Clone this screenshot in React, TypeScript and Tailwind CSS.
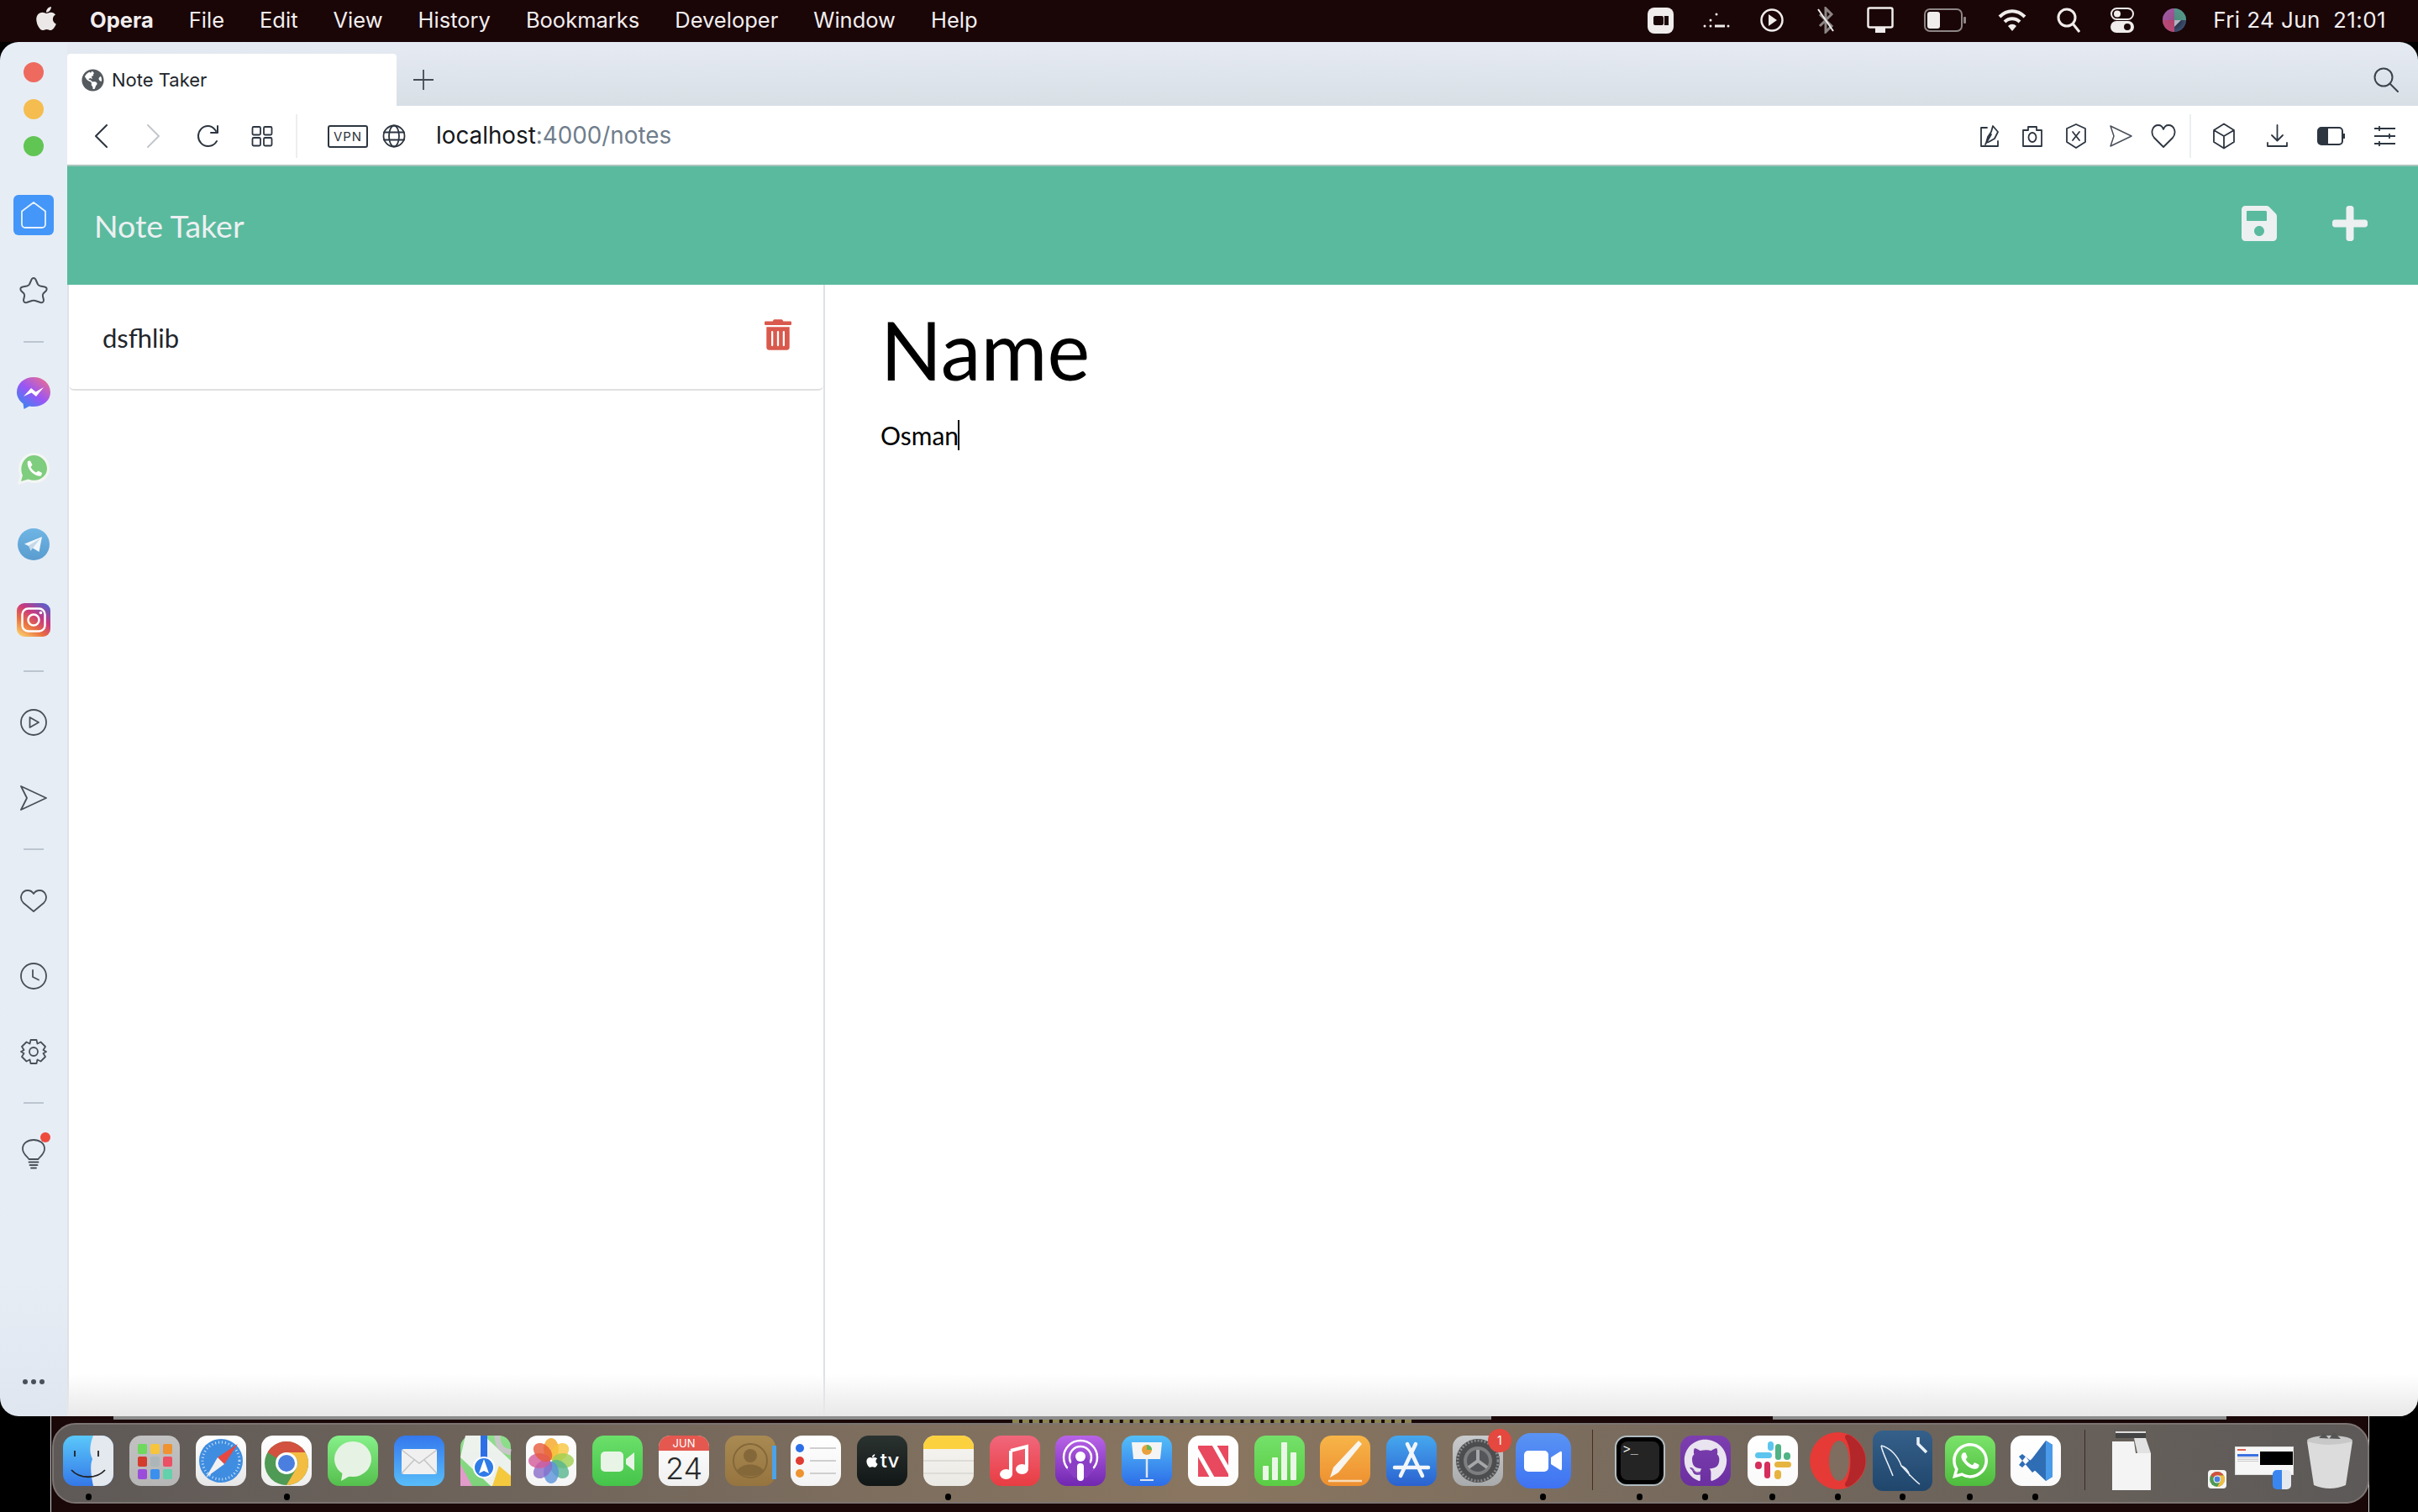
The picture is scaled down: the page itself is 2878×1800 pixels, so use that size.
import React from "react";
import { FaApple, FaGlobeAmericas, FaSave, FaPlus, FaTrashAlt, FaGithub, FaWhatsapp } from "react-icons/fa";

const inter = "font-['Inter','Liberation_Sans',sans-serif]";
const lato = "font-['Lato','Liberation_Sans',sans-serif]";
const S = "#4a5059";
const A = "#2c3540";

function Ic({ children, w = 30, h = 30, vb = "0 0 30 30", sw = 2, c = A, cls = "" }: any) {
  return (
    <svg width={w} height={h} viewBox={vb} fill="none" stroke={c} strokeWidth={sw} strokeLinecap="round" strokeLinejoin="round" className={"shrink-0 " + cls}>
      {children}
    </svg>
  );
}

function SideSlot({ children }: any) {
  return <div className="h-[90px] flex items-center justify-center shrink-0">{children}</div>;
}
function SideSep() {
  return (
    <div className="h-[32px] flex items-center justify-center shrink-0">
      <div className="w-[24px] h-[2px] bg-[#bcc5cf]" />
    </div>
  );
}

function Sidebar() {
  return (
    <div className="w-[80px] shrink-0 h-full flex flex-col bg-gradient-to-b from-[#e7edf5] from-90% to-[#dfe6ef]">
      <div className="flex flex-col items-center gap-5 pt-[24px] pb-[25px] shrink-0">
        <div className="w-[24px] h-[24px] rounded-full bg-[#ee6a5f]" />
        <div className="w-[24px] h-[24px] rounded-full bg-[#f5bd4f]" />
        <div className="w-[24px] h-[24px] rounded-full bg-[#61c554]" />
      </div>
      <SideSlot>
        <div className="w-[48px] h-[48px] rounded-[6px] bg-[#4496f8] flex items-center justify-center">
          <Ic w={32} h={34} vb="0 0 32 34" c="#e8f2fe" sw={1.8}>
            <path d="M2 12.5 L16 2 L30 12.5 V28 a4 4 0 0 1 -4 4 H6 a4 4 0 0 1 -4 -4 Z" />
          </Ic>
        </div>
      </SideSlot>
      <SideSlot>
        <Ic w={36} h={34} vb="0 0 36 34" c={S} sw={2}>
          <path d="M18 2 Q20 2 21 5 L23 9.5 Q24 11 26 11.5 L31 12.5 Q35 13.5 33 17 L29.5 20.5 Q28.5 22 29 24 L30 28 Q30 32 26 31 L20 29 Q18 28.5 16 29 L10 31 Q6 32 6 28 L7 24 Q7.5 22 6.5 20.5 L3 17 Q1 13.5 5 12.5 L10 11.5 Q12 11 13 9.5 L15 5 Q16 2 18 2 Z" />
        </Ic>
      </SideSlot>
      <SideSep />
      <SideSlot>
        <svg width="40" height="40" viewBox="0 0 40 40" className="shrink-0">
          <defs>
            <linearGradient id="msg" x1="0.1" y1="1" x2="0.9" y2="0">
              <stop offset="0" stopColor="#2d8cf0" />
              <stop offset="0.5" stopColor="#9a55f5" />
              <stop offset="1" stopColor="#f0708a" />
            </linearGradient>
          </defs>
          <path d="M20 1 C31 1 40 8.500 40 19 C40 29 31 36 20 36 C18 36 16.500 35.800 15 35.400 L8.500 39 L7.500 32.500 C3 29 0 24.500 0 19 C0 8.500 9 1 20 1 Z" fill="url(#msg)" />
          <path d="M8 24 L17 14 L22.500 18.500 L32 13 L23 24 L17.500 19.500 Z" fill="#fff" />
        </svg>
      </SideSlot>
      <SideSlot>
        <svg width="40" height="40" viewBox="0 0 40 40" className="shrink-0">
          <path d="M1 39 L4 28.500 C-2 15 8 1 20 1 C31 1 39 9.500 39 20 C39 31 28 41 13 35.500 Z" fill="#f3f6f4" />
          <path d="M5 35 L7 28 C2 16 10 4 20 4 C29 4 36 11 36 20 C36 29 26 37 13.500 32.500 Z" fill="#7fcd7e" />
          <path d="M13 11 L16 10.500 L18.500 15.500 L16.500 18 C18 21 20 23 23 24.500 L25.500 22.500 L30 25 L29 28.500 C21 30 11 20 13 11 Z" fill="#fff" />
        </svg>
      </SideSlot>
      <SideSlot>
        <svg width="38" height="38" viewBox="0 0 38 38" className="shrink-0">
          <defs>
            <linearGradient id="tel" x1="0" y1="0" x2="0" y2="1">
              <stop offset="0" stopColor="#6eb5e4" />
              <stop offset="1" stopColor="#5a9ccf" />
            </linearGradient>
          </defs>
          <circle cx="19" cy="19" r="19" fill="url(#tel)" />
          <path d="M8 18.500 L29 10 L25.500 28 L18 23.500 Z" fill="#f0f6fb" />
          <path d="M13 20.500 L15.500 27 L18 23.500 L27 12 Z" fill="#c5d9e8" />
        </svg>
      </SideSlot>
      <SideSlot>
        <svg width="40" height="40" viewBox="0 0 40 40" className="shrink-0">
          <defs>
            <linearGradient id="ig" x1="0.1" y1="1" x2="0.8" y2="0">
              <stop offset="0" stopColor="#fbd36f" />
              <stop offset="0.35" stopColor="#e9703f" />
              <stop offset="0.65" stopColor="#c9387f" />
              <stop offset="1" stopColor="#5c5fc9" />
            </linearGradient>
          </defs>
          <rect width="40" height="40" rx="9" fill="url(#ig)" />
          <rect x="6.500" y="6.500" width="27" height="27" rx="7" fill="none" stroke="#fff" strokeWidth="2.500" />
          <circle cx="20" cy="20" r="6.500" fill="none" stroke="#fff" strokeWidth="2.500" />
          <circle cx="28.500" cy="11.500" r="1.800" fill="#fff" />
        </svg>
      </SideSlot>
      <SideSep />
      <SideSlot>
        <Ic w={32} h={32} vb="0 0 32 32" c={S} sw={1.8}>
          <circle cx="16" cy="16" r="15" />
          <path d="M11.500 10 L22 16 L11.500 22 Z" />
        </Ic>
      </SideSlot>
      <SideSlot>
        <Ic w={32} h={32} vb="0 0 32 32" c={S} sw={1.8}>
          <path d="M1 2 L31 16 L1 30 L8 16 Z" />
        </Ic>
      </SideSlot>
      <SideSep />
      <SideSlot>
        <Ic w={32} h={30} vb="0 0 32 30" c={S} sw={1.8}>
          <path d="M16 28 L4 18 C-2 12 2 3 9 3 C12 3 14.500 4.500 16 7 C17.500 4.500 20 3 23 3 C30 3 34 12 28 18 Z" />
        </Ic>
      </SideSlot>
      <SideSlot>
        <Ic w={32} h={32} vb="0 0 32 32" c={S} sw={1.8}>
          <circle cx="16" cy="16" r="15" />
          <path d="M15 9 V17 L22 20.500" />
        </Ic>
      </SideSlot>
      <SideSlot>
        <Ic w={32} h={32} vb="0 0 32 32" c={S} sw={1.8}>
          <path d="M12.500 2 H19.500 L20.500 6.500 L24.500 4.500 L30 10 L27.500 14 L31 16 L27.500 18 L30 22 L24.500 27.500 L20.500 25.500 L19.500 30 H12.500 L11.500 25.500 L7.500 27.500 L2 22 L4.500 18 L1 16 L4.500 14 L2 10 L7.500 4.500 L11.500 6.500 Z" />
          <circle cx="16" cy="16" r="5" />
        </Ic>
      </SideSlot>
      <SideSep />
      <SideSlot>
        <div className="relative w-[28px] h-[36px]">
          <Ic w={28} h={36} vb="0 0 28 36" c={S} sw={1.8}>
            <path d="M8.500 24 C6 20 1 18 1 11.500 C1 5 7 1 14 1 C21 1 27 5 27 11.500 C27 18 22 20 19.500 24 Z" />
            <path d="M8.500 27.500 H19.500 M9.500 31 H18.500 M11 34.500 H17" />
          </Ic>
          <div className="absolute -top-[8px] -right-[6px] w-[12px] h-[12px] rounded-full bg-[#ee4a3e]" />
        </div>
      </SideSlot>
      <div className="mt-auto pb-[38px] flex justify-center gap-[4px] shrink-0">
        <div className="w-[6px] h-[6px] rounded-full bg-[#4a5059]" />
        <div className="w-[6px] h-[6px] rounded-full bg-[#4a5059]" />
        <div className="w-[6px] h-[6px] rounded-full bg-[#4a5059]" />
      </div>
    </div>
  );
}

function TabStrip() {
  return (
    <div className="h-[76px] shrink-0 bg-gradient-to-b from-[#e6ebf3] to-[#d8dfe5] flex items-end pr-[23px]">
      <div className={"w-[392px] h-[62px] bg-white rounded-t-[4px] flex items-center pl-[17px] gap-[9px] shrink-0 " + inter}>
        <FaGlobeAmericas className="text-[#555a5f] w-[27px] h-[27px]" />
        <span className="text-[22px] text-[#22262b] leading-none">Note Taker</span>
      </div>
      <div className="h-[62px] flex items-center ml-[19px]">
        <Ic w={26} h={26} vb="0 0 26 26" c="#444b53" sw={1.8}>
          <path d="M13 1 V25 M1 13 H25" strokeLinecap="butt" />
        </Ic>
      </div>
      <div className="ml-auto h-[62px] flex items-center">
        <Ic w={30} h={30} vb="0 0 30 30" c="#3c434b" sw={2}>
          <circle cx="12" cy="12" r="10.500" />
          <path d="M19.500 19.500 L29 29" />
        </Ic>
      </div>
    </div>
  );
}

function AddressBar() {
  return (
    <div className="h-[72px] shrink-0 bg-white border-b-2 border-[#a9c4bb] flex items-center pt-[2px] pl-[32px] pr-[26px]">
      <Ic w={16} h={28} vb="0 0 16 28" c={A} sw={2}><path d="M15 1 L2 14 L15 27" /></Ic>
      <Ic w={16} h={28} vb="0 0 16 28" c="#c3c7cb" sw={2} cls="ml-[47px]"><path d="M1 1 L14 14 L1 27" /></Ic>
      <Ic w={27} h={28} vb="0 0 27 28" c={A} sw={2} cls="ml-[43px]">
        <path d="M23 8 C20.500 4 17 2 13.500 2 C7 2 2 7.500 2 14 C2 20.500 7 26 13.500 26 C18 26 22 23.500 24 20" />
        <path d="M25 2 V10 H17" />
      </Ic>
      <Ic w={26} h={26} vb="0 0 26 26" c={A} sw={1.8} cls="ml-[38px]">
        <rect x="1.500" y="2" width="9.500" height="9.500" rx="1.500" />
        <rect x="15" y="2" width="9.500" height="9.500" rx="1.500" />
        <rect x="1.500" y="15" width="9.500" height="9.500" rx="1.500" />
        <rect x="15" y="15" width="9.500" height="9.500" rx="1.500" />
      </Ic>
      <div className="w-[2px] h-[52px] bg-[#eceef0] ml-[27px]" />
      <div className={"ml-[36px] w-[48px] h-[27px] border-2 border-[#2c3540] rounded-[3px] flex items-center justify-center text-[15px] tracking-[1px] text-[#2c3540] leading-none " + inter}>VPN</div>
      <Ic w={28} h={28} vb="0 0 28 28" c={A} sw={1.8} cls="ml-[17px]">
        <circle cx="14" cy="14" r="12.500" />
        <ellipse cx="14" cy="14" rx="6" ry="12.500" />
        <path d="M2 9.500 H26 M2 18.500 H26" />
      </Ic>
      <div className={"ml-[36px] text-[27.8px] leading-none whitespace-nowrap " + inter}>
        <span className="text-[#15181c]">localhost</span>
        <span className="text-[#6f7d8c]">:4000/notes</span>
      </div>
      <div className="ml-auto flex items-center">
        <Ic w={24} h={28} vb="0 0 24 28" c={A} sw={1.8}>
          <path d="M9 4 H2 V26 H22 V20 M16 2 L22 9 L18 17 L11 21 L8 22 L10 15 L14 9 Z M7 24 L14 12" />
        </Ic>
        <Ic w={26} h={28} vb="0 0 26 28" c={A} sw={1.8} cls="ml-[26px]">
          <path d="M2 7 H8 V3 H18 V7 H24 V26 H2 Z" />
          <ellipse cx="13" cy="15.500" rx="4.500" ry="5.500" />
        </Ic>
        <Ic w={26} h={30} vb="0 0 26 30" c={A} sw={1.8} cls="ml-[26px]">
          <path d="M13 1 L24 6 V22 L13 29 L2 22 V6 Z" />
          <path d="M9 10 L17 20 M17 10 L9 20" />
        </Ic>
        <Ic w={28} h={26} vb="0 0 28 26" c="#4a5059" sw={1.5} cls="ml-[26px]">
          <path d="M2 1 L27 13 L2 25 L6 13 Z" />
        </Ic>
        <Ic w={30} h={30} vb="0 0 30 30" c={A} sw={1.8} cls="ml-[22px]">
          <path d="M15 28 L4 17 C-1 11 2 2 9 2 C12 2 14 4 15 7 C16 4 18 2 21 2 C28 2 31 11 26 17 Z" />
        </Ic>
        <div className="w-[2px] h-[52px] bg-[#eceef0] ml-[16px]" />
        <Ic w={28} h={32} vb="0 0 28 32" c={A} sw={1.8} cls="ml-[25px]">
          <path d="M14 1.500 L26 9 V23 L14 30.500 L2 23 V9 Z M2 9 L14 16 L26 9 M14 16 V30.500" />
        </Ic>
        <Ic w={27} h={28} vb="0 0 27 28" c={A} sw={1.8} cls="ml-[36px]">
          <path d="M13.500 1 V19 M7 13 L13.500 19.500 L20 13 M2 22 V26 H25 V22" />
        </Ic>
        <svg width="33" height="22" viewBox="0 0 33 22" className="ml-[34px] shrink-0">
          <rect x="1" y="1" width="29" height="20" rx="4" fill="none" stroke={A} strokeWidth="2" />
          <path d="M1 5 a4 4 0 0 1 4 -4 H13 V21 H5 a4 4 0 0 1 -4 -4 Z" fill={A} />
          <rect x="31" y="8" width="2" height="6" fill={A} />
        </svg>
        <Ic w={27} h={26} vb="0 0 27 26" c={A} sw={1.8} cls="ml-[34px]">
          <path d="M1 4 H26 M1 13 H26 M1 22 H26 M7 1 V7 M19 10 V16 M7 19 V25" strokeLinecap="butt" />
        </Ic>
      </div>
    </div>
  );
}

function Page() {
  return (
    <div className="flex-1 min-h-0 flex flex-col relative">
      <div className="h-[141px] shrink-0 bg-[#5aba9e] flex items-center pl-[32px] pr-[60px]">
        <div className={"text-[37.5px] leading-none text-[#ecf0f1] " + lato}>Note Taker</div>
        <FaSave className="ml-auto w-[42px] h-[48px] text-[#ecf0f1] -mt-[5px]" />
        <FaPlus className="ml-[66px] w-[42px] h-[48px] text-[#ecf0f1] -mt-[5px]" />
      </div>
      <div className="flex-1 min-h-0 flex bg-white">
        <div className="w-[902px] shrink-0 border-l-2 border-r-2 border-[#dee2e6]">
          <div className={"h-[126px] border-b-2 border-[#e0e0e0] rounded-b-[6px] flex items-center justify-between pl-[40px] pr-[38px] " + lato}>
            <span className="text-[31px] text-[#22262b] leading-none mt-[2px]">dsfhlib</span>
            <FaTrashAlt className="w-[32px] h-[37px] text-[#d9594c] -mt-[5px]" />
          </div>
        </div>
        <div className={"flex-1 pl-[66px] pt-[19px] " + lato}>
          <h1 className="text-[96px] leading-[115px] text-black font-normal">Name</h1>
          <div className="mt-[21px] text-[30px] leading-[48px] text-black flex items-center">
            <span>Osman</span>
            <span className="w-[2px] h-[36px] bg-black -ml-[1px]" />
          </div>
        </div>
      </div>
      <div className="absolute left-0 right-0 bottom-0 h-[50px] bg-gradient-to-b from-transparent to-[#e8e8e8] pointer-events-none" />
    </div>
  );
}

function Tile({ id, from, to, children, rx = 14 }: any) {
  return (
    <svg width="60" height="60" viewBox="0 0 60 60" className="shrink-0 overflow-visible">
      <defs>
        <linearGradient id={id} x1="0" y1="0" x2="0" y2="1">
          <stop offset="0" stopColor={from} />
          <stop offset="1" stopColor={to} />
        </linearGradient>
      </defs>
      <rect width="60" height="60" rx={rx} fill={`url(#${id})`} />
      {children}
    </svg>
  );
}

function ChromeMark({ size = 52 }: { size?: number }) {
  const r = 26;
  return (
    <svg width={size} height={size} viewBox="0 0 52 52" className="shrink-0">
      <circle cx={r} cy={r} r={r} fill="#4f9a55" />
      <path d="M26 0 A26 26 0 0 1 48.500 13 H26 A13 13 0 0 0 14.500 20 L3.500 13 A26 26 0 0 1 26 0 Z" fill="#d2513f" />
      <path d="M48.500 13 A26 26 0 0 1 26 52 L37.500 32.500 A13 13 0 0 0 37.500 19.500 L26 13 Z" fill="#f3bd42" />
      <circle cx={r} cy={r} r="13" fill="#fff" />
      <circle cx={r} cy={r} r="10" fill="#4a7fe0" />
    </svg>
  );
}

function Slot({ w = "w-[60px]", dot = false, children }: any) {
  return (
    <div className={"relative h-[60px] flex items-center justify-center shrink-0 " + w}>
      {children}
      {dot && <div className="absolute top-[69px] left-1/2 -ml-[3.5px] w-[7px] h-[8px] rounded-full bg-black" />}
    </div>
  );
}

function Dock() {
  const gap = "w-[18.76px] shrink-0";
  const G = () => <div className={gap} />;
  return (
    <div className="w-[2758px] h-[96px] shrink-0 rounded-[28px] border-2 border-[#7b7472] bg-gradient-to-r from-[#5e5957] via-[#8a7660] to-[#5c5958] flex items-center pl-[11px] pb-[6px]">
      <Slot dot>
        <Tile id="f1" from="#5ac8fa" to="#3478e8">
          <path d="M36 0 H46 A14 14 0 0 1 60 14 V46 A14 14 0 0 1 46 60 H36 C33 45 32 35 35 28 C30 18 33 8 36 0 Z" fill="#e4e8ef" />
          <path d="M14 18 V25 M42 18 V25" stroke="#222" strokeWidth="1.8" />
          <path d="M10 41 C20 52 40 52 50 41" stroke="#222" strokeWidth="1.8" fill="none" />
        </Tile>
      </Slot>
      <G />
      <Slot>
        <Tile id="f2" from="#c2c2c2" to="#b6b6b6">
          {[["#6ed95c", 10, 10], ["#f7c43c", 25, 10], ["#ee9330", 40, 10], ["#d33c2c", 10, 25], ["#adb5b8", 25, 25], ["#ec5064", 40, 25], ["#9a4ddb", 10, 40], ["#3b90ee", 25, 40], ["#63d1ac", 40, 40]].map((x: any, i) => (
            <rect key={i} x={x[1]} y={x[2]} width="11" height="12" rx="2" fill={x[0]} />
          ))}
        </Tile>
      </Slot>
      <G />
      <Slot>
        <Tile id="f3" from="#ffffff" to="#e6e6e6">
          <circle cx="30" cy="30" r="26" fill="#3f8de0" />
          <circle cx="30" cy="30" r="22" fill="none" stroke="#cfe5fb" strokeWidth="3" strokeDasharray="1 3" />
          <path d="M50 10 L34 34 L26 26 Z" fill="#e8483f" />
          <path d="M12 50 L26 26 L34 34 Z" fill="#f2f2f2" />
        </Tile>
      </Slot>
      <G />
      <Slot dot>
        <Tile id="f4" from="#ffffff" to="#eeeeee">
          <g transform="translate(4 7)"><ChromeMark size={52} /></g>
        </Tile>
      </Slot>
      <G />
      <Slot>
        <Tile id="f5" from="#86f08a" to="#55bf4d">
          <ellipse cx="30" cy="28" rx="22" ry="21" fill="#e6f3e4" />
          <path d="M18 42 L16 54 L30 46 Z" fill="#e6f3e4" />
        </Tile>
      </Slot>
      <G />
      <Slot>
        <Tile id="f6" from="#3478ee" to="#58bdf8">
          <rect x="9" y="16" width="42" height="30" rx="3" fill="#f0f0f0" />
          <path d="M9 17 L30 33 L51 17 M9 45 L24 29 M51 45 L36 29" stroke="#c4c4c4" strokeWidth="1.500" fill="none" />
        </Tile>
      </Slot>
      <G />
      <Slot>
        <Tile id="f7" from="#8fe08c" to="#7ed27a">
          <path d="M0 34 L14 60 H0 Z" fill="#e29bcb" />
          <path d="M6 0 H28 L60 30 V60 H36 L0 26 Z" fill="#f2f2f2" opacity="0.95" />
          <path d="M38 60 H60 V48 L46 36 Z" fill="#f4c93e" />
          <rect x="24" y="0" width="8" height="30" fill="#2d6fe6" />
          <path d="M44 0 C44 14 50 18 60 20" stroke="#c7c7c7" strokeWidth="7" fill="none" />
          <circle cx="28" cy="38" r="13" fill="#fff" />
          <circle cx="28" cy="38" r="11" fill="#2f7be8" />
          <path d="M28 28 L34 45 L28 42 L22 45 Z" fill="#fff" />
        </Tile>
      </Slot>
      <G />
      <Slot>
        <Tile id="f8" from="#ffffff" to="#f4f4f4">
          {[["#f5a623", 0], ["#f7c43c", 45], ["#9fd04f", 90], ["#58b58d", 135], ["#5b93d9", 180], ["#8a6bc9", 225], ["#d35a9a", 270], ["#e65a3a", 315]].map((x: any, i) => (
            <ellipse key={i} cx="30" cy="16" rx="9" ry="13" fill={x[0]} opacity="0.8" transform={`rotate(${x[1]} 30 30)`} />
          ))}
        </Tile>
      </Slot>
      <G />
      <Slot>
        <Tile id="f9" from="#6be06a" to="#45c44a">
          <rect x="10" y="19" width="27" height="24" rx="5" fill="#e8f5e6" />
          <path d="M40 28 L50 20 V42 L40 34 Z" fill="#e8f5e6" />
        </Tile>
      </Slot>
      <G />
      <Slot>
        <Tile id="f10" from="#ffffff" to="#f0f0f0">
          <path d="M0 18 V14 A14 14 0 0 1 14 0 H46 A14 14 0 0 1 60 14 V18 Z" fill="#e4584f" />
          <text x="30" y="14" textAnchor="middle" fontSize="13" fill="#fff" fontFamily="Inter, sans-serif">JUN</text>
          <text x="30" y="52" textAnchor="middle" fontSize="36" fill="#2a2a2a" fontFamily="Inter, sans-serif" fontWeight="300">24</text>
        </Tile>
      </Slot>
      <G />
      <Slot>
        <Tile id="f11" from="#a98a52" to="#96743f">
          <rect x="56" y="12" width="5" height="40" fill="#4ba3e8" />
          <circle cx="30" cy="30" r="20" fill="none" stroke="#84683a" strokeWidth="2" />
          <circle cx="30" cy="24" r="8" fill="#84683a" />
          <path d="M14 42 C20 32 40 32 46 42 C40 50 20 50 14 42 Z" fill="#84683a" />
        </Tile>
      </Slot>
      <G />
      <Slot>
        <Tile id="f12" from="#ffffff" to="#f3f3f3">
          <circle cx="11" cy="15" r="5" fill="#2d6fe6" />
          <circle cx="11" cy="30" r="5" fill="#e03c32" />
          <circle cx="11" cy="45" r="5" fill="#ee9330" />
          <path d="M23 15 H54 M23 30 H54 M23 45 H54" stroke="#cfcfcf" strokeWidth="2" />
        </Tile>
      </Slot>
      <G />
      <Slot>
        <div className="relative w-[60px] h-[60px] rounded-[14px] bg-gradient-to-b from-[#2b3331] to-[#111716] flex items-center justify-center gap-[2px] text-white">
          <FaApple className="w-[16px] h-[18px]" />
          <span className={"text-[24px] leading-none font-medium " + inter}>tv</span>
        </div>
      </Slot>
      <G />
      <Slot dot>
        <Tile id="f13" from="#f7f6f2" to="#eae9e4">
          <path d="M0 16 V14 A14 14 0 0 1 14 0 H46 A14 14 0 0 1 60 14 V16 Z" fill="#fbd140" />
          <path d="M0 30 H60 M0 45 H60" stroke="#dddcd7" strokeWidth="2" />
        </Tile>
      </Slot>
      <G />
      <Slot>
        <Tile id="f14" from="#f1677c" to="#e83c42">
          <path d="M25 18 L44 13 V38" stroke="#fff" strokeWidth="4" fill="none" />
          <path d="M25 18 V46" stroke="#fff" strokeWidth="4" />
          <ellipse cx="19.500" cy="46" rx="7.500" ry="6" fill="#fff" />
          <ellipse cx="38.500" cy="40" rx="7.500" ry="6" fill="#fff" />
        </Tile>
      </Slot>
      <G />
      <Slot>
        <Tile id="f15" from="#b863e8" to="#7127b0">
          <circle cx="30" cy="26" r="20" stroke="#fff" strokeWidth="2.500" fill="none" />
          <circle cx="30" cy="26" r="13" stroke="#fff" strokeWidth="2.500" fill="none" />
          <path d="M14 40 L22 50 H38 L46 40 L36 24 H24 Z" fill="#8a3ec6" />
          <circle cx="30" cy="25" r="6" fill="#fff" />
          <rect x="26" y="33" width="8" height="21" rx="4" fill="#fff" />
        </Tile>
      </Slot>
      <G />
      <Slot>
        <Tile id="f16" from="#54bff8" to="#2d6de8">
          <path d="M12 8 H48 L46 28 H14 Z" fill="#f4f4f4" />
          <circle cx="30" cy="17" r="6" fill="#e9a13c" />
          <path d="M30 11 V17 H36 A6 6 0 0 0 30 11 Z" fill="#5bb85b" />
          <path d="M30 28 V50" stroke="#dde6f0" strokeWidth="2.500" />
          <path d="M22 52 H38 V54 H22 Z" fill="#dde6f0" />
        </Tile>
      </Slot>
      <G />
      <Slot>
        <Tile id="f17" from="#ffffff" to="#fbfbfb">
          <rect x="12" y="12" width="36" height="37" fill="#e8495e" />
          <path d="M9 15 L30 52 M30 9 L51 46" stroke="#fff" strokeWidth="5" />
        </Tile>
      </Slot>
      <G />
      <Slot>
        <Tile id="f18" from="#74e06a" to="#5acd44">
          <rect x="10" y="36" width="7" height="17" rx="1" fill="#eaf7e6" />
          <rect x="21" y="26" width="7" height="27" rx="1" fill="#eaf7e6" />
          <rect x="32" y="8" width="7" height="45" rx="1" fill="#eaf7e6" />
          <rect x="43" y="20" width="7" height="33" rx="1" fill="#eaf7e6" />
        </Tile>
      </Slot>
      <G />
      <Slot>
        <Tile id="f19" from="#f7b548" to="#ee8f30">
          <path d="M12 50 L16 38 L46 6 L50 10 L22 44 Z" fill="#f8f4ee" />
          <path d="M10 54 H50" stroke="#f8dcb8" strokeWidth="2.500" />
        </Tile>
      </Slot>
      <G />
      <Slot>
        <Tile id="f20" from="#46a8ee" to="#2a62d0">
          <path d="M25 10 L43 48 M35 10 L17 48" stroke="#f2f6fb" strokeWidth="4.500" strokeLinecap="round" />
          <path d="M10 38 H50" stroke="#f2f6fb" strokeWidth="4.500" strokeLinecap="round" />
        </Tile>
      </Slot>
      <G />
      <Slot>
        <div className="relative w-[60px] h-[60px]">
          <Tile id="f21" from="#c8cacb" to="#a8aaab">
            <circle cx="30" cy="30" r="26" fill="#4c4d4e" />
            <circle cx="30" cy="30" r="24" fill="none" stroke="#88898a" strokeWidth="3" strokeDasharray="2 2" />
            <circle cx="30" cy="30" r="17" fill="#7d7e80" />
            <circle cx="30" cy="30" r="13" fill="#55565a" />
            <path d="M30 17 V30 L19 38 M30 30 L41 38" stroke="#a6a7a9" strokeWidth="4" fill="none" />
          </Tile>
          <div className="absolute -top-[8px] -right-[10px] w-[28px] h-[28px] rounded-full bg-[#e5483f] flex items-center justify-center text-white text-[14px] leading-none">
            <span className={inter}>1</span>
          </div>
        </div>
      </Slot>
      <div className="w-[15px] shrink-0" />
      <Slot w="w-[66px]" dot>
        <div className="w-[66px] h-[66px] rounded-[18px] bg-gradient-to-b from-[#5a94f3] to-[#3f72f2] flex items-center justify-center shrink-0 gap-[3px]">
          <div className="w-[29px] h-[25px] rounded-[5px] bg-white" />
          <svg width="13" height="24" viewBox="0 0 13 24"><path d="M0 8 L11 1 Q13 0 13 3 V21 Q13 24 11 23 L0 16 Z" fill="#fff" /></svg>
        </div>
      </Slot>
      <div className="w-[25px] shrink-0" />
      <div className="w-[1px] h-[72px] bg-[#4a2a28] shrink-0 -mt-[2px]" />
      <div className="w-[26px] shrink-0" />
      <Slot dot>
        <div className="w-[60px] h-[60px] rounded-[14px] bg-black border-2 border-[#b0bcc0] flex p-[5px]">
          <div className={"w-full h-full rounded-[8px] bg-[#242424] text-white text-[15px] leading-none pl-[3px] pt-[3px] " + "font-['Liberation_Mono',monospace]"}>&gt;_</div>
        </div>
      </Slot>
      <div className="w-[18px] shrink-0" />
      <Slot dot>
        <div className="w-[60px] h-[60px] rounded-[14px] bg-gradient-to-b from-[#7d3fb0] to-[#6b2fa0] flex items-center justify-center">
          <FaGithub className="w-[52px] h-[52px] text-[#e9e4ef]" />
        </div>
      </Slot>
      <div className="w-[20px] shrink-0" />
      <Slot dot>
        <Tile id="f22" from="#ffffff" to="#fafafa">
          <rect x="9" y="20" width="20" height="7" rx="3.500" fill="#5cc5ee" />
          <rect x="24" y="7" width="7" height="11" rx="3.500" fill="#5cc5ee" />
          <rect x="33" y="10" width="7" height="19" rx="3.500" fill="#4fb386" />
          <rect x="43" y="20" width="8" height="9" rx="4" fill="#4fb386" />
          <rect x="9" y="31" width="8" height="9" rx="4" fill="#d62d5d" />
          <rect x="20" y="31" width="7" height="20" rx="3.500" fill="#d62d5d" />
          <rect x="32" y="31" width="20" height="7" rx="3.500" fill="#e6b43f" />
          <rect x="32" y="41" width="8" height="11" rx="4" fill="#e6b43f" />
        </Tile>
      </Slot>
      <div className="w-[14px] shrink-0" />
      <Slot w="w-[67px]" dot>
        <svg width="67" height="68" viewBox="0 0 67 68" className="shrink-0 overflow-visible">
          <ellipse cx="33.500" cy="34" rx="33.500" ry="34" fill="#e63a36" />
          <path d="M50 5 C72 20 72 48 50 63 C42 68 40 62 44 58 C50 45 50 23 44 10 C40 6 42 0 50 5 Z" fill="#b3262a" />
          <ellipse cx="35" cy="34" rx="12" ry="24" fill="#7f6d5f" />
        </svg>
      </Slot>
      <div className="w-[8px] shrink-0" />
      <Slot w="w-[71px]" dot>
        <div className="w-[71px] h-[72px] rounded-[12px] bg-gradient-to-b from-[#35608a] to-[#20466c] flex items-center justify-center shrink-0">
          <svg width="62" height="64" viewBox="0 0 62 64" fill="none" stroke="#e8eff6" strokeWidth="1.500">
            <path d="M6 14 C16 16 26 26 30 38 C36 44 42 52 52 60 M6 14 C8 24 14 34 20 50 M30 38 C34 40 38 42 40 50" />
            <path d="M50 4 L50 12 L60 22" strokeWidth="3.500" />
          </svg>
        </div>
      </Slot>
      <div className="w-[15px] shrink-0" />
      <Slot dot>
        <div className="w-[60px] h-[60px] rounded-[14px] bg-gradient-to-b from-[#7be36a] to-[#4ebc3d] flex items-center justify-center">
          <FaWhatsapp className="w-[48px] h-[48px] text-white" />
        </div>
      </Slot>
      <div className="w-[18px] shrink-0" />
      <Slot dot>
        <Tile id="f23" from="#ffffff" to="#fafafa">
          <path d="M42 6 L50 11 V49 L42 54 L20 33 L26 27 Z" fill="#2f6db5" />
          <path d="M42 6 L50 11 V49 L42 54 Z" fill="#4a9aea" />
          <path d="M10 25 L14 22 L34 38 L26 44 Z M10 35 L14 38 L22 30 L18 25 Z" fill="#2f6db5" />
        </Tile>
      </Slot>
      <div className="w-[28px] shrink-0" />
      <div className="w-[1px] h-[72px] bg-[#3a2a28] shrink-0 -mt-[2px]" />
      <div className="w-[32px] shrink-0" />
      <Slot w="w-[46px]">
        <svg width="46" height="70" viewBox="0 0 46 70" className="shrink-0 overflow-visible">
          <path d="M4 0 H40 V2 H4 Z" fill="#ddd" />
          <rect x="4" y="2" width="36" height="6" fill="#444" />
          <path d="M0 12 H26 L28 26 H46 V70 H0 Z" fill="#f4f4f4" />
          <path d="M26 8 H40 L46 26 H30 Z" fill="#e2e2e2" />
        </svg>
      </Slot>
      <div className="w-[68px] shrink-0" />
      <Slot w="w-[22px]">
        <div className="relative top-[22px] w-[22px] h-[22px] rounded-[4px] bg-[#f5f5f5] flex items-center justify-center shrink-0">
          <ChromeMark size={18} />
        </div>
      </Slot>
      <div className="w-[10px] shrink-0" />
      <Slot w="w-[70px]">
        <div className="relative w-[70px] h-[34px] bg-[#f6f6f6] border border-[#ddd] flex shrink-0">
          <div className="w-[29px] h-full flex flex-col gap-[1px] p-[2px]">
            <div className="h-[2px] w-[10px] bg-[#e06050]" />
            <div className="h-[3px] bg-[#3a70e0] mt-[3px]" />
            <div className="h-[1px] bg-[#ccc]" />
            <div className="h-[1px] bg-[#ccc]" />
            <div className="h-[1px] bg-[#ccc]" />
          </div>
          <div className="flex-1 h-[16px] bg-black mt-[5px]" />
          <div className="absolute top-[27px] right-[2px] w-[22px] h-[23px] rounded-[5px] bg-gradient-to-r from-[#3a86f0] from-50% to-[#e4e8ef] to-50%" />
        </div>
      </Slot>
      <div className="w-[16px] shrink-0" />
      <Slot w="w-[54px]">
        <svg width="54" height="70" viewBox="0 0 54 70" className="shrink-0 overflow-visible">
          <ellipse cx="27" cy="11" rx="27" ry="6" fill="#c8c8c8" />
          <path d="M14 8 L20 2 L26 9 L32 1 L40 9 Z" fill="#555" />
          <path d="M0 12 L8 64 Q27 72 46 64 L54 12 Q27 20 0 12 Z" fill="#dcdcdc" />
        </svg>
      </Slot>
    </div>
  );
}

function Menu() {
  return (
    <div className={"h-[50px] shrink-0 bg-[#1a0507] flex items-center pl-[40px] pb-[2px] text-[#f2eeee] text-[25.5px] leading-none whitespace-nowrap " + inter}>
      <FaApple className="w-[30px] h-[32px] text-[#ece8e8] shrink-0 -mt-[4px]" />
      <span className="ml-[37px] font-bold">Opera</span>
      <div className="ml-[42px] flex items-center gap-[42px]">
        <span>File</span>
        <span>Edit</span>
        <span>View</span>
        <span>History</span>
        <span>Bookmarks</span>
        <span>Developer</span>
        <span>Window</span>
        <span>Help</span>
      </div>
      <div className="ml-auto flex items-center pr-[38px]">
        <div className="w-[31px] h-[31px] rounded-[8px] bg-[#f0ecec] flex items-center justify-center gap-[1px]">
          <div className="w-[12px] h-[11px] bg-[#1a0507] rounded-[2px]" />
          <div className="w-[5px] h-[11px] bg-[#1a0507]" />
        </div>
        <svg width="32" height="18" viewBox="0 0 32 18" className="ml-[35px] shrink-0" fill="#f0ecec">
          <circle cx="16" cy="2" r="1.500" />
          <circle cx="9" cy="9" r="1.500" />
          <circle cx="2" cy="16" r="1.500" />
          <circle cx="9" cy="16" r="1.500" />
          <rect x="14" y="14.500" width="12" height="3" />
          <circle cx="30" cy="16" r="1.500" />
        </svg>
        <svg width="28" height="30" viewBox="0 0 28 30" className="ml-[36px] shrink-0">
          <circle cx="14" cy="15" r="12.500" fill="none" stroke="#f0ecec" strokeWidth="2.500" />
          <path d="M10 8 L20 15 L10 22 Z" fill="#f0ecec" />
        </svg>
        <svg width="24" height="32" viewBox="0 0 24 32" className="ml-[38px] shrink-0" fill="none" stroke="#8d8686" strokeWidth="3">
          <path d="M5 9 L19 23 L12 30 V2 L19 9 L5 23" />
          <path d="M3 3 L21 29" stroke="#eee" strokeWidth="2" />
        </svg>
        <svg width="32" height="32" viewBox="0 0 32 32" className="ml-[37px] shrink-0">
          <rect x="1.500" y="1.500" width="29" height="23" rx="2" fill="none" stroke="#f0ecec" strokeWidth="2.500" />
          <rect x="10" y="25" width="12" height="6" fill="#f0ecec" />
        </svg>
        <svg width="50" height="28" viewBox="0 0 50 28" className="ml-[36px] shrink-0">
          <rect x="1" y="1" width="44" height="26" rx="6" fill="none" stroke="#8d8686" strokeWidth="2" />
          <rect x="4" y="4" width="15" height="20" rx="3" fill="#f0ecec" />
          <rect x="47" y="10" width="3" height="8" rx="1" fill="#8d8686" />
        </svg>
        <svg width="34" height="28" viewBox="0 0 34 28" className="ml-[38px] shrink-0" fill="none" stroke="#f0ecec" strokeWidth="4">
          <path d="M2 10 C11 1 23 1 32 10 M8 16 C13 11 21 11 26 16" />
          <path d="M12 21 L17 27 L22 21 C19 18 15 18 12 21 Z" fill="#f0ecec" stroke="none" />
        </svg>
        <svg width="28" height="30" viewBox="0 0 28 30" className="ml-[36px] shrink-0" fill="none" stroke="#f0ecec" strokeWidth="3">
          <circle cx="12" cy="12" r="10" />
          <path d="M19 19 L27 29" />
        </svg>
        <svg width="28" height="30" viewBox="0 0 28 30" className="ml-[36px] shrink-0">
          <rect x="1" y="1" width="26" height="13" rx="6.500" fill="none" stroke="#f0ecec" strokeWidth="2" />
          <circle cx="8" cy="7.500" r="4" fill="#f0ecec" />
          <rect x="0" y="16" width="28" height="14" rx="7" fill="#f0ecec" />
          <circle cx="20" cy="23" r="4" fill="#1a0507" />
        </svg>
        <svg width="28" height="28" viewBox="0 0 28 28" className="ml-[34px] shrink-0">
          <defs>
            <radialGradient id="siri" cx="0.5" cy="0.5" r="0.5">
              <stop offset="0" stopColor="#1c1e2e" />
              <stop offset="1" stopColor="#3c5070" />
            </radialGradient>
          </defs>
          <circle cx="14" cy="14" r="14" fill="url(#siri)" />
          <path d="M14 0 A14 14 0 0 1 28 14 L14 14 Z" fill="#5aa890" opacity="0.8" />
          <path d="M0 14 A14 14 0 0 1 14 0 L14 14 Z" fill="#b85aa8" opacity="0.8" />
          <path d="M0 14 A14 14 0 0 0 14 28 L14 14 Z" fill="#d84a7a" opacity="0.8" />
          <path d="M14 14 L22 14 L14 22 Z" fill="#e8eef4" opacity="0.7" />
        </svg>
        <span className="ml-[32px] whitespace-pre text-[26px] tracking-[0.4px]">Fri 24 Jun  21:01</span>
      </div>
    </div>
  );
}

export default function App() {
  return (
    <div className="relative w-[2878px] h-[1800px] overflow-hidden bg-black flex flex-col">
      <Menu />
      <div className="relative z-10 h-[1636px] shrink-0 rounded-[22px] overflow-hidden flex">
        <Sidebar />
        <div className="flex-1 min-w-0 flex flex-col">
          <TabStrip />
          <AddressBar />
          <Page />
        </div>
      </div>
      <div className="flex-1 min-h-0 relative flex pt-[8px] pl-[60px] bg-black">
        <div className="absolute left-[60px] w-[2760px] top-0 bottom-0 bg-[#1a0808] border-x border-[#cfcfcf]" />
        <div className="absolute left-[135px] w-[1640px] top-0 h-[4px] bg-[#8c8c8c]" />
        <div className="absolute left-[2110px] w-[540px] top-0 h-[4px] bg-[#8c8c8c]" />
        <div className="absolute left-[1205px] w-[475px] top-[4px] h-[4px] border-t-4 border-dashed border-[#8a8550]" />
        <div className="relative ml-[2px]">
          <Dock />
        </div>
      </div>
    </div>
  );
}
